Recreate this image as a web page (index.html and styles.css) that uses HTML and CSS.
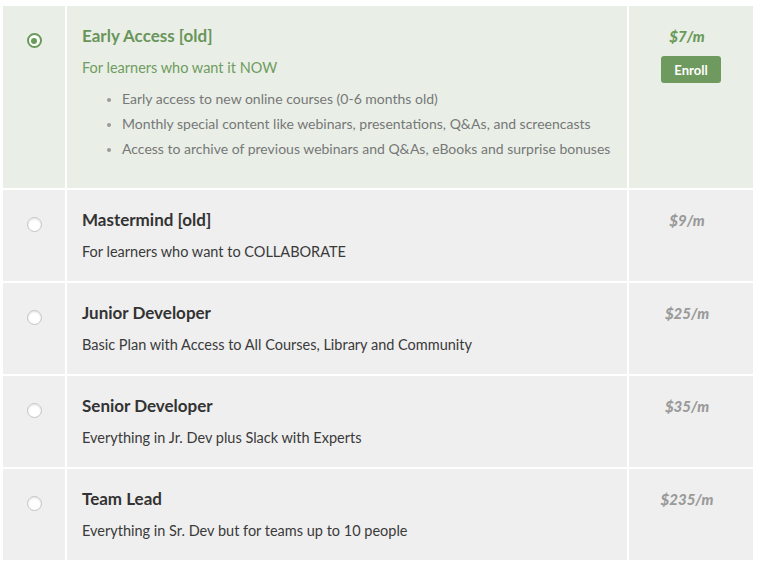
FILE: index.html
```html
<!DOCTYPE html>
<html>
<head>
<meta charset="utf-8">
<link rel="stylesheet" href="styles.css">
</head>
<body>
<div class="plans">
  <div class="plan selected">
    <div class="cell radio-cell"><span class="radio on"></span></div>
    <div class="cell info">
      <div class="title">Early Access [old]</div>
      <div class="desc">For learners who want it NOW</div>
      <ul class="features">
        <li>Early access to new online courses (0-6 months old)</li>
        <li>Monthly special content like webinars, presentations, Q&amp;As, and screencasts</li>
        <li>Access to archive of previous webinars and Q&amp;As, eBooks and surprise bonuses</li>
      </ul>
    </div>
    <div class="cell price-cell">
      <div class="price">$7/m</div>
      <button class="enroll">Enroll</button>
    </div>
  </div>
  <div class="plan">
    <div class="cell radio-cell"><span class="radio"></span></div>
    <div class="cell info">
      <div class="title">Mastermind [old]</div>
      <div class="desc">For learners who want to COLLABORATE</div>
    </div>
    <div class="cell price-cell"><div class="price">$9/m</div></div>
  </div>
  <div class="plan">
    <div class="cell radio-cell"><span class="radio"></span></div>
    <div class="cell info">
      <div class="title">Junior Developer</div>
      <div class="desc">Basic Plan with Access to All Courses, Library and Community</div>
    </div>
    <div class="cell price-cell"><div class="price">$25/m</div></div>
  </div>
  <div class="plan">
    <div class="cell radio-cell"><span class="radio"></span></div>
    <div class="cell info">
      <div class="title">Senior Developer</div>
      <div class="desc">Everything in Jr. Dev plus Slack with Experts</div>
    </div>
    <div class="cell price-cell"><div class="price">$35/m</div></div>
  </div>
  <div class="plan">
    <div class="cell radio-cell"><span class="radio"></span></div>
    <div class="cell info">
      <div class="title">Team Lead</div>
      <div class="desc">Everything in Sr. Dev but for teams up to 10 people</div>
    </div>
    <div class="cell price-cell"><div class="price">$235/m</div></div>
  </div>
</div>
</body>
</html>
```
FILE: styles.css
```css
html, body {
  margin: 0;
  padding: 0;
  background: #ffffff;
}
body {
  font-family: Lato, "Open Sans", sans-serif;
  padding: 6px 6px 0 3px;
}
.plans {
  width: 750px;
  display: flex;
  flex-direction: column;
  gap: 2px;
  background: #ffffff;
}
.plan {
  display: grid;
  grid-template-columns: 62px 560px 124px;
  column-gap: 2px;
}
.cell {
  background: #efefef;
}
.plan.selected .cell {
  background: #e9efe7;
}
.radio-cell {
  display: flex;
  justify-content: center;
  align-items: flex-start;
  padding-top: 27px;
}
.radio {
  width: 15px;
  height: 15px;
  border-radius: 50%;
  box-sizing: border-box;
  background: #ffffff;
  border: 1px solid #c4c4c4;
  box-shadow: inset 0 1px 2px rgba(0,0,0,0.12);
}
.radio.on {
  background: #ffffff;
  border: 2.5px solid #6a9a5a;
  position: relative;
  box-shadow: none;
}
.radio.on::after {
  content: "";
  position: absolute;
  left: 50%;
  top: 50%;
  width: 6px;
  height: 6px;
  margin: -3px 0 0 -3px;
  border-radius: 50%;
  background: #6a9a5a;
}
.info {
  padding: 20px 15px 19px 15px;
}
.title {
  font-size: 17px;
  font-weight: 700;
  line-height: 20px;
  color: #333333;
  margin-bottom: 12px;
}
.desc {
  font-size: 14.5px;
  line-height: 20px;
  color: #3a3a3a;
}
.selected .title {
  color: #6a955a;
}
.selected .desc {
  color: #6f9c60;
}
.features {
  margin: 8px 0 8px 0;
  padding-left: 40px;
  font-size: 14px;
  line-height: 25px;
  color: #777777;
}
.features li::marker {
  color: #9a9a9a;
  font-size: 12px;
}
.price-cell {
  padding-top: 20px;
  display: flex;
  flex-direction: column;
  align-items: center;
}
.price {
  font-size: 15px;
  font-weight: 900;
  font-style: italic;
  line-height: 20px;
  color: #9a9a9a;
  margin-right: 8px;
}
.selected .price {
  color: #6a9a5a;
}
.enroll {
  margin-top: 10px;
  width: 60px;
  height: 27px;
  border: none;
  border-radius: 3px;
  background: #6f9a5f;
  color: #ffffff;
  font-family: Lato, sans-serif;
  font-size: 13px;
  font-weight: 700;
  padding: 0;
}
```
